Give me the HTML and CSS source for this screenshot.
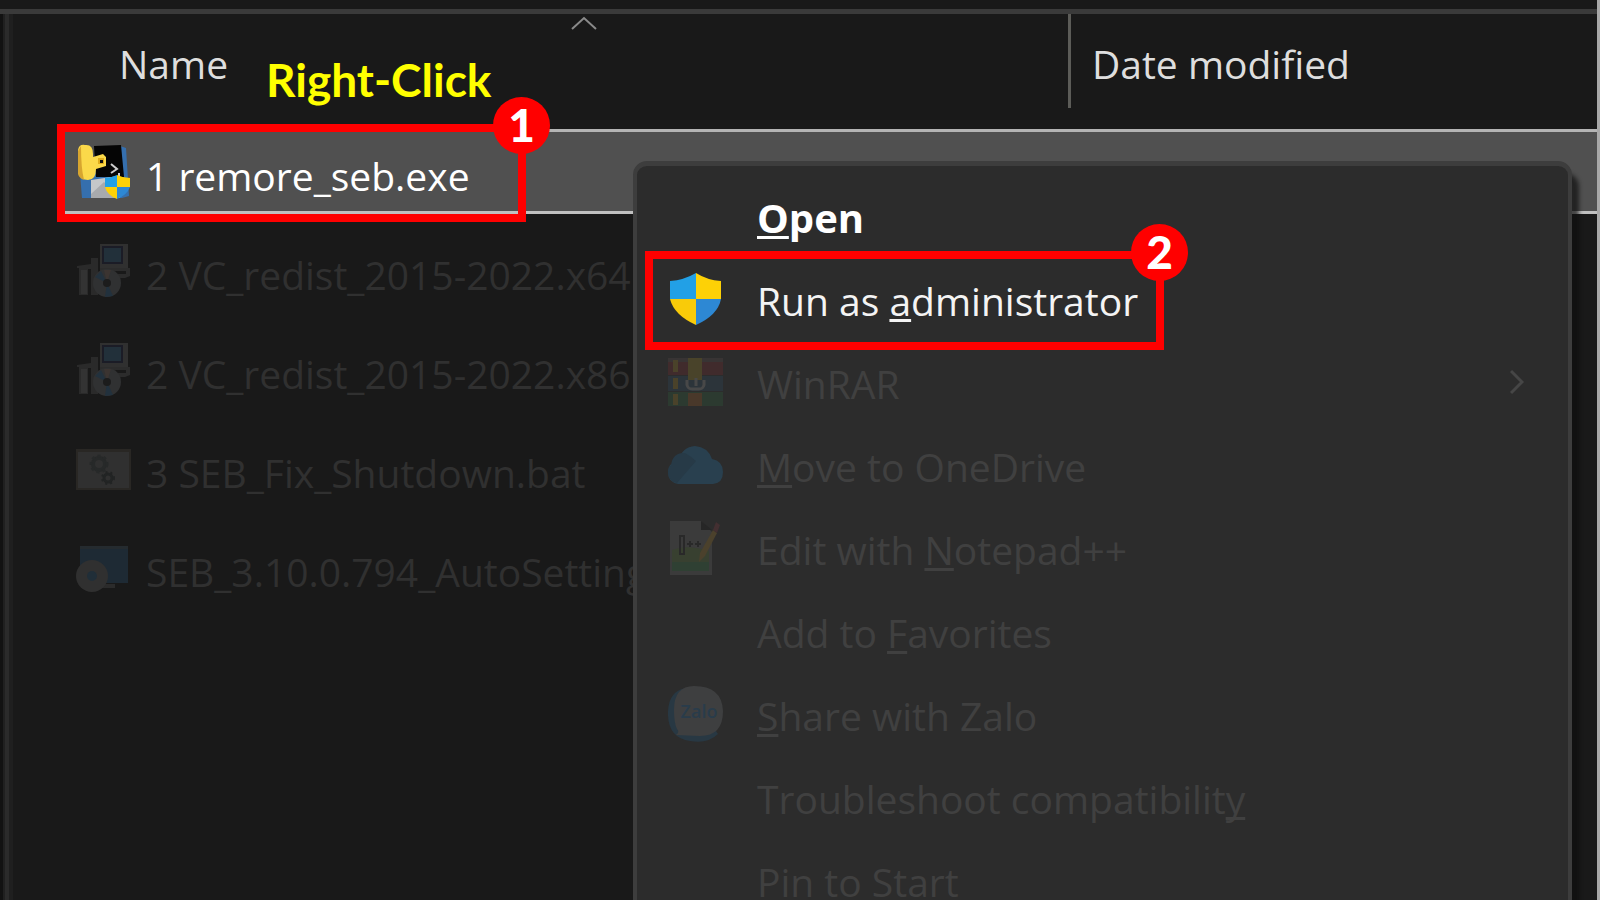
FILE: index.html
```html
<!DOCTYPE html>
<html lang="en">
<head>
<meta charset="utf-8">
<title>Run as administrator</title>
<link rel="stylesheet" href="styles.css">
</head>
<body>
<svg class="defs" aria-hidden="true">
  <symbol id="shield" viewBox="0 0 56 56">
    <path d="M2 10Q16 9 28 2V28H2Z" fill="#22a0e6"/>
    <path d="M53 10Q39 9 28 2V28H53Z" fill="#fdd106"/>
    <path d="M2 28H28V54Q6 44 2 28Z" fill="#f9cb09"/>
    <path d="M53 28H28V54Q50 44 53 28Z" fill="#2d88d4"/>
  </symbol>
  <symbol id="installer" viewBox="0 0 56 56">
    <path d="M1 23L15 21V15H22V52H15V26H12V52H3V25H1Z" fill="#2a2a2a"/>
    <path d="M5 27H11V51H5Z" fill="#333"/>
    <path d="M24 1H52V25H24Z" fill="#303030"/>
    <path d="M26 3H47V21H26Z" fill="#1b1c26"/>
    <path d="M28 5H45V19H28Z" fill="#22303a"/>
    <path d="M24 25H54V33L49 35H42V31H50V28H24Z" fill="#2c2c2c"/>
    <circle cx="31" cy="40" r="14" fill="#303132"/>
    <path d="M31 40L19 34L25 28ZM31 40L29 54L37 53Z" fill="#22313d"/>
    <path d="M31 40L28 27L35 27Z" fill="#3b3431"/>
    <circle cx="31" cy="40" r="4" fill="#1c1c1c"/>
  </symbol>
</svg>
<main class="window">
  <table class="files">
    <colgroup><col class="col-name"><col></colgroup>
    <thead>
      <tr>
        <th scope="col">
          <svg class="sort" viewBox="0 0 28 14" aria-hidden="true"><path d="M2 13L14 2L26 13" fill="none" stroke="#8a8a8a" stroke-width="2"/></svg>
          <span class="head-label">Name</span>
          <strong class="hint">Right-Click</strong>
        </th>
        <th scope="col" class="date"><span class="head-label">Date modified</span></th>
      </tr>
    </thead>
    <tbody>
      <tr class="selected">
        <td>
          <div class="cell">
            <svg class="icon" viewBox="0 0 56 56" aria-hidden="true">
              <path d="M4 30L44 2L50 4L53 52L46 54H6Z" fill="#356fae"/>
              <path d="M18 2L45 1L48 33H20Z" fill="#050505"/>
              <path d="M15 36L42 32L44 54H15Z" fill="#c5c7c9"/>
              <path d="M28 38L44 54H15V50Z" fill="#a8aaad"/>
              <path d="M2 6Q3 0 9 1Q17 0 17 10V13L27 10L30 13V22L20 25Q20 36 12 36Q4 36 3 29Z" fill="#fbd94a"/>
              <path d="M2 7V30Q3 34 8 36Q5 24 5 2Z" fill="#d7a52f"/>
              <path d="M22 14H28V20H22Z" fill="#e0ad1d"/><path d="M24 16H27V19H24Z" fill="#111"/>
              <path d="M35 20L41 25L35 29M43 29V33" fill="none" stroke="#ccc" stroke-width="2"/>
              <path d="M29 34Q35 34 41 31V43H29Z" fill="#22a0e6"/>
              <path d="M54 34Q47 34 41 31V43H54Z" fill="#fdd106"/>
              <path d="M29 43H41V55Q31 51 29 43Z" fill="#fdd106"/>
              <path d="M54 43H41V55Q51 51 54 43Z" fill="#2d88d4"/>
            </svg>
            <span class="name">1 remore_seb.exe</span>
            <span class="callout callout-file"><b class="badge">1</b></span>
          </div>
        </td>
        <td><div class="cell"></div></td>
      </tr>
      <tr>
        <td><div class="cell"><svg class="icon" aria-hidden="true"><use href="#installer"/></svg><span class="name">2 VC_redist_2015-2022.x64</span></div></td>
        <td></td>
      </tr>
      <tr>
        <td><div class="cell"><svg class="icon" aria-hidden="true"><use href="#installer"/></svg><span class="name">2 VC_redist_2015-2022.x86</span></div></td>
        <td></td>
      </tr>
      <tr>
        <td>
          <div class="cell">
            <svg class="icon" viewBox="0 0 56 56" aria-hidden="true">
              <path d="M0 8H55V49H0Z" fill="#292724"/>
              <path d="M2 11H53V47H2Z" fill="#303030"/>
              <circle cx="23" cy="23" r="6" fill="none" stroke="#272929" stroke-width="4"/>
              <circle cx="23" cy="23" r="8" fill="none" stroke="#272929" stroke-width="3" stroke-dasharray="3 3"/>
              <circle cx="32" cy="37" r="4" fill="none" stroke="#222424" stroke-width="3"/>
              <circle cx="32" cy="37" r="6" fill="none" stroke="#222424" stroke-width="2" stroke-dasharray="2 3"/>
            </svg>
            <span class="name">3 SEB_Fix_Shutdown.bat</span>
          </div>
        </td>
        <td></td>
      </tr>
      <tr>
        <td>
          <div class="cell">
            <svg class="icon" viewBox="0 0 56 56" aria-hidden="true">
              <path d="M4 6H52V43H4Z" fill="#1e2a34"/>
              <path d="M4 6H52V9H4Z" fill="#252b2f"/>
              <path d="M25 44H39V48H25Z" fill="#2b2b2b"/>
              <circle cx="16" cy="36" r="16" fill="#303030"/>
              <circle cx="16" cy="36" r="5" fill="#202e38"/>
            </svg>
            <span class="name">SEB_3.10.0.794_AutoSetting</span>
          </div>
        </td>
        <td></td>
      </tr>
    </tbody>
  </table>

  <div class="menu" role="menu">
    <button class="item open" role="menuitem"><span class="slot"></span><span><u>O</u>pen</span></button>
    <button class="item run" role="menuitem">
      <svg class="icon" aria-hidden="true"><use href="#shield"/></svg>
      <span>Run as <u>a</u>dministrator</span>
      <span class="callout callout-menu"><b class="badge">2</b></span>
    </button>
    <button class="item" role="menuitem">
      <svg class="icon" viewBox="0 0 56 56" aria-hidden="true">
        <path d="M0 6H55V21H0Z" fill="#402b2c"/><path d="M0 4H55V8H0Z" fill="#383434"/>
        <path d="M0 22H55V37H0Z" fill="#2c343a"/>
        <path d="M0 38H55V52H0Z" fill="#2c3a30"/>
        <path d="M5 6H10V18H5ZM5 24H10V35H5ZM5 40H10V51H5Z" fill="#4a422a"/>
        <path d="M20 4H34V26H20Z" fill="#49432a"/>
        <path d="M20 39H34V52H20Z" fill="#49382a"/>
        <path d="M19 26V31Q20 35 24 35H31Q35 35 36 31V26M28 24V32" fill="none" stroke="#484848" stroke-width="3"/>
      </svg>
      <span>WinRAR</span>
      <svg class="more" viewBox="0 0 14 26" aria-hidden="true"><path d="M1 2L12 13L1 24" fill="none" stroke="#464646" stroke-width="3"/></svg>
    </button>
    <button class="item" role="menuitem">
      <svg class="icon" viewBox="0 0 56 56" aria-hidden="true">
        <path d="M10 47Q0 45 0 35Q0 26 10 24Q14 10 27 9Q40 10 44 22Q55 24 55 35Q55 46 45 47Z" fill="#29404f"/>
        <path d="M3 28Q5 15 17 16Q24 20 28 24L9 46Q0 44 0 35Q0 31 3 28Z" fill="#273a47"/>
      </svg>
      <span><u>M</u>ove to OneDrive</span>
    </button>
    <button class="item" role="menuitem">
      <svg class="icon" viewBox="0 0 56 56" aria-hidden="true">
        <path d="M2 1H33L44 12V55H2Z" fill="#3b3b3b"/>
        <path d="M4 30Q18 24 41 31V51H4Z" fill="#384030"/>
        <path d="M4 42H41V51H4Z" fill="#2f4033"/>
        <path d="M33 1V10H44Z" fill="#262626"/>
        <path d="M12 16H16V34H12Z" fill="none" stroke="#292929" stroke-width="2"/>
        <path d="M19 24H25M22 21V27M27 24H33M30 21V27" stroke="#292929" stroke-width="2"/>
        <path d="M31 42L32 33L45 10L49 13L37 36Z" fill="#4b412c"/>
        <path d="M45 10L48 2L52 5L49 13Z" fill="#432f31"/>
      </svg>
      <span>Edit with <u>N</u>otepad++</span>
    </button>
    <button class="item" role="menuitem"><span class="slot"></span><span>Add to <u>F</u>avorites</span></button>
    <button class="item" role="menuitem">
      <svg class="icon" viewBox="0 0 56 56" aria-hidden="true">
        <path d="M18 2Q1 5 0 25Q-1 52 22 55Q40 58 50 48Z" fill="#283843"/>
        <path d="M26 0Q54 0 55 25Q55 50 32 50L8 49Q12 46 9 43Q6 37 6 24Q6 0 26 0Z" fill="#3e3f40"/>
        <text class="zalo" x="31" y="32" text-anchor="middle">Zalo</text>
      </svg>
      <span><u>S</u>hare with Zalo</span>
    </button>
    <button class="item" role="menuitem"><span class="slot"></span><span>Troubleshoot compatibilit<u>y</u></span></button>
    <button class="item" role="menuitem"><span class="slot"></span><span><u>P</u>in to Start</span></button>
  </div>
</main>
</body>
</html>
```
FILE: styles.css
```css
* { box-sizing: border-box; }

body {
  margin: 0;
  background: #191919;
  font-family: "Open Sans", "Noto Sans", sans-serif;
  font-size: 39px;
}

.defs { position: absolute; width: 0; height: 0; }

.window {
  position: relative;
  height: 100vh;
  overflow: hidden;
  padding-top: 14px;
  padding-left: 64px;
  border-right: 3px solid #a8a8a8;
  background:
    linear-gradient(#191919 9px, #3a3a3a 9px, #3a3a3a 14px, transparent 14px),
    linear-gradient(90deg, #121212 3px, #202020 3px, #202020 5px, #2b2b2b 5px, #2b2b2b 9px, #1f1f1f 9px, #1f1f1f 13px, #191919 13px);
}

.files {
  width: 100%;
  table-layout: fixed;
  border-collapse: collapse;
}
.col-name { width: 1004px; }

th {
  position: relative;
  height: 115px;
  padding: 0 0 0 55px;
  vertical-align: top;
  text-align: left;
  font-weight: 400;
  color: #dedede;
}
.head-label {
  display: inline-block;
  padding-top: 22px;
  line-height: 56px;
}
.date { padding-left: 24px; }
.date::before {
  content: "";
  position: absolute;
  left: 0;
  top: 0;
  width: 3px;
  height: 94px;
  background: #5c5c58;
}
.sort {
  position: absolute;
  left: 506px;
  top: 2px;
  width: 28px;
  height: 14px;
}
.hint {
  position: absolute;
  left: 202px;
  top: 38px;
  font: 700 46px/56px Lato, sans-serif;
  color: #ff0;
}

td { height: 99px; padding: 0; vertical-align: top; }
.cell {
  position: relative;
  display: flex;
  align-items: center;
  gap: 14px;
  height: 85px;
  padding-left: 12px;
  white-space: nowrap;
  color: #303030;
}
.selected .cell {
  background: #505050;
  color: #fff;
  box-shadow: inset 0 3px #b4b4b4, inset 0 -3px #c0c0c0;
}
.name { padding-top: 8px; }
.icon { flex: none; width: 56px; height: 56px; }

.menu {
  position: absolute;
  left: 633px;
  top: 161px;
  right: 25px;
  padding: 10px 0;
  border: 4px solid #3d3d3d;
  border-top-width: 5px;
  border-radius: 14px;
  background: #2c2c2c;
  box-shadow: 7px 12px 4px #0e0e0eb0;
}
.item {
  position: relative;
  display: flex;
  align-items: center;
  gap: 33px;
  width: 100%;
  height: 83px;
  padding: 0 44px 0 31px;
  border: 0;
  background: none;
  color: #404040;
  font: inherit;
  text-align: left;
  white-space: nowrap;
}
.item svg { margin-bottom: 4px; }
.slot { flex: none; width: 56px; }
.open { color: #fff; font-size: 40px; font-weight: 700; }
.run { color: #f4f4f4; }
.more { width: 14px; height: 26px; margin-left: auto; }
u {
  text-decoration-thickness: 3px;
  text-underline-offset: 3px;
  text-decoration-skip-ink: none;
}
.zalo { font: 600 18px "Open Sans", sans-serif; fill: #293c4b; }

.callout {
  position: absolute;
  z-index: 1;
  border: 8px solid #f00;
  pointer-events: none;
}
.callout-file { left: -7px; top: -5px; bottom: -8px; width: 469px; }
.callout-menu { left: 8px; top: -8px; bottom: -8px; width: 519px; }
.badge {
  position: absolute;
  right: -32px;
  top: -35px;
  width: 57px;
  height: 57px;
  border-radius: 50%;
  background: #f00;
  color: #fff;
  font: 900 46px/55px Lato, sans-serif;
  text-align: center;
}
```
